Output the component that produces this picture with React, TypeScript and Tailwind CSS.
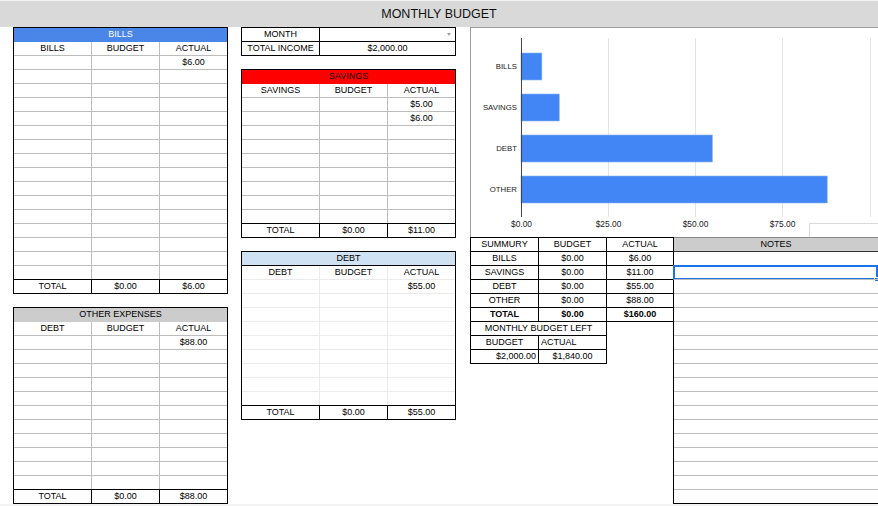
import React from "react";

const C1 = "w-[77px]";
const C2 = "w-[68px]";

type Cells = [string, string, string];

function Row({
  cells,
  top,
  line,
  bold,
}: {
  cells: Cells;
  top: string;
  line: string;
  bold?: boolean;
}) {
  return (
    <div className={`h-[14px] flex border-t ${top} ${bold ? "font-bold" : ""}`}>
      <div className={`${C1} flex items-center justify-center`}>{cells[0]}</div>
      <div className={`${C2} border-l ${line} flex items-center justify-center`}>{cells[1]}</div>
      <div className={`${C2} border-l ${line} flex items-center justify-center`}>{cells[2]}</div>
    </div>
  );
}

function Table({
  title,
  titleCls,
  titleLine,
  heads,
  data,
  rows,
  total,
  line,
}: {
  title: string;
  titleCls: string;
  titleLine: string;
  heads: Cells;
  data: Record<number, Cells>;
  rows: number;
  total: Cells;
  line: string;
}) {
  return (
    <div className="w-[215px] border border-black">
      <div className={`h-[13px] flex items-center justify-center ${titleCls}`}>{title}</div>
      <Row cells={heads} top={titleLine} line={line} />
      {Array.from({ length: rows }).map((_, i) => (
        <Row key={i} cells={data[i] ?? ["", "", ""]} top={line} line={line} />
      ))}
      <Row cells={total} top="border-black" line="border-black" />
    </div>
  );
}

function Chart() {
  const bars = [
    { label: "BILLS", v: 6 },
    { label: "SAVINGS", v: 11 },
    { label: "DEBT", v: 55 },
    { label: "OTHER", v: 88 },
  ];
  const x0 = 50;
  const unit = 3.48;
  const grid = [137, 224, 311, 399];
  const ticks = [
    { x: 50, t: "$0.00" },
    { x: 137, t: "$25.00" },
    { x: 224, t: "$50.00" },
    { x: 311, t: "$75.00" },
  ];
  const font = "'Liberation Sans',Arial,sans-serif";
  return (
    <svg width="407" height="209" viewBox="0 0 407 209" className="block">
      {grid.map((g) => (
        <line key={g} x1={g + 0.5} x2={g + 0.5} y1={10} y2={189} stroke="#e3e3e3" strokeWidth={1} />
      ))}
      {bars.map((b, i) => {
        const y = 25 + i * 41;
        return (
          <g key={b.label}>
            <rect x={x0} y={y} width={b.v * unit} height={27} fill="#4285f4" stroke="#8ab4f8" strokeWidth={0.6} />
            <text
              x={46}
              y={y + 13.5}
              textAnchor="end"
              dominantBaseline="central"
              fontSize="7.8"
              fill="#222"
              fontFamily={font}
            >
              {b.label}
            </text>
          </g>
        );
      })}
      <line x1={x0 + 0.5} x2={x0 + 0.5} y1={10} y2={189} stroke="#444" strokeWidth={1} />
      {ticks.map((t) => (
        <text
          key={t.t}
          x={t.x + 0.5}
          y={196}
          textAnchor="middle"
          dominantBaseline="central"
          fontSize="8.4"
          fill="#222"
          fontFamily={font}
        >
          {t.t}
        </text>
      ))}
      <rect x={338.5} y={195.5} width={70} height={15} fill="#fff" stroke="#dadada" strokeWidth={1} />
    </svg>
  );
}

export default function App() {
  const summary: Cells[] = [
    ["BILLS", "$0.00", "$6.00"],
    ["SAVINGS", "$0.00", "$11.00"],
    ["DEBT", "$0.00", "$55.00"],
    ["OTHER", "$0.00", "$88.00"],
  ];
  return (
    <div className="w-[878px] h-[506px] overflow-hidden bg-white text-black text-[9px] leading-none whitespace-nowrap font-['Liberation_Sans',Arial,sans-serif]">
      <div className="h-px bg-[#f1f3f4]" />
      <div className="h-[26px] bg-[#d9d9d9] flex items-center justify-center text-[12.5px] text-[#111]">
        MONTHLY BUDGET
      </div>
      <div className="h-[477px] flex">
        {/* column 1 */}
        <div className="ml-[13px] flex flex-col gap-[13px]">
          <Table
            title="BILLS"
            titleCls="bg-[#4a86e8] text-white"
            titleLine="border-[#4a86e8]"
            heads={["BILLS", "BUDGET", "ACTUAL"]}
            data={{ 0: ["", "", "$6.00"] }}
            rows={16}
            total={["TOTAL", "$0.00", "$6.00"]}
            line="border-[#bdbdbd]"
          />
          <Table
            title="OTHER EXPENSES"
            titleCls="bg-[#cccccc]"
            titleLine="border-[#cccccc]"
            heads={["DEBT", "BUDGET", "ACTUAL"]}
            data={{ 0: ["", "", "$88.00"] }}
            rows={11}
            total={["TOTAL", "$0.00", "$88.00"]}
            line="border-[#bdbdbd]"
          />
        </div>
        {/* column 2 */}
        <div className="ml-[13px] flex flex-col gap-[13px]">
          <div className="w-[215px] border border-black">
            <div className="h-[13px] flex">
              <div className="w-[77px] flex items-center justify-center">MONTH</div>
              <div className="w-[136px] border-l border-black flex items-center justify-end pr-[4px]">
                <span className="w-0 h-0 border-x-[2.5px] border-x-transparent border-t-[3px] border-t-[#a0a0a0]" />
              </div>
            </div>
            <div className="h-[14px] flex border-t border-black">
              <div className="w-[77px] flex items-center justify-center">TOTAL INCOME</div>
              <div className="w-[136px] border-l border-black flex items-center justify-center">$2,000.00</div>
            </div>
          </div>
          <Table
            title="SAVINGS"
            titleCls="bg-[#ff0000] text-[#111]"
            titleLine="border-[#ff0000]"
            heads={["SAVINGS", "BUDGET", "ACTUAL"]}
            data={{ 0: ["", "", "$5.00"], 1: ["", "", "$6.00"] }}
            rows={9}
            total={["TOTAL", "$0.00", "$11.00"]}
            line="border-[#bdbdbd]"
          />
          <Table
            title="DEBT"
            titleCls="bg-[#cfe2f3]"
            titleLine="border-black"
            heads={["DEBT", "BUDGET", "ACTUAL"]}
            data={{ 0: ["", "", "$55.00"] }}
            rows={9}
            total={["TOTAL", "$0.00", "$55.00"]}
            line="border-[#ebebeb]"
          />
        </div>
        {/* column 3 */}
        <div className="ml-[14px] w-[408px] flex flex-col">
          <div className="h-[210px] border-t border-l border-[#9e9e9e]">
            <Chart />
          </div>
          <div className="flex">
            <div className="w-[203px] flex flex-col">
              <div className="border-l border-t border-b border-black">
                <div className="h-[13px] flex">
                  <div className="w-[67px] flex items-center justify-center">SUMMURY</div>
                  <div className="w-[68px] border-l border-black flex items-center justify-center">BUDGET</div>
                  <div className="w-[67px] border-l border-black flex items-center justify-center">ACTUAL</div>
                </div>
                {summary.map((r) => (
                  <div key={r[0]} className="h-[14px] flex border-t border-black">
                    <div className="w-[67px] flex items-center justify-center">{r[0]}</div>
                    <div className="w-[68px] border-l border-black flex items-center justify-center">{r[1]}</div>
                    <div className="w-[67px] border-l border-black flex items-center justify-center">{r[2]}</div>
                  </div>
                ))}
                <div className="h-[14px] flex border-t border-black font-bold">
                  <div className="w-[67px] flex items-center justify-center">TOTAL</div>
                  <div className="w-[68px] border-l border-black flex items-center justify-center">$0.00</div>
                  <div className="w-[67px] border-l border-black flex items-center justify-center">$160.00</div>
                </div>
              </div>
              <div className="w-[137px] border-l border-r border-b border-black">
                <div className="h-[13px] flex items-center justify-center">MONTHLY BUDGET LEFT</div>
                <div className="h-[14px] flex border-t border-black">
                  <div className="w-[67px] flex items-center justify-center">BUDGET</div>
                  <div className="w-[68px] border-l border-black flex items-center pl-[2px]">ACTUAL</div>
                </div>
                <div className="h-[14px] flex border-t border-black">
                  <div className="w-[67px] flex items-center justify-end pr-[2px]">$2,000.00</div>
                  <div className="w-[68px] border-l border-black flex items-center justify-center">$1,840.00</div>
                </div>
              </div>
            </div>
            <div className="w-[205px] border-l border-b border-black">
              <div className="h-[14px] border-t border-[#8a8a8a] bg-[#cccccc] flex items-center justify-center">
                NOTES
              </div>
              {Array.from({ length: 18 }).map((_, i) => (
                <div
                  key={i}
                  className={`h-[14px] border-t relative ${i === 0 ? "border-[#333]" : "border-[#bdbdbd]"}`}
                >
                  {i === 1 && (
                    <div className="absolute left-[-1px] top-[-1px] w-[205px] h-[15px] border-2 border-[#1a73e8]">
                      <div className="absolute right-[-3px] bottom-[-4px] w-[5px] h-[5px] bg-[#1a73e8] border border-white" />
                    </div>
                  )}
                </div>
              ))}
            </div>
          </div>
        </div>
      </div>
      <div className="h-[2px] bg-[#f3f3f3]" />
    </div>
  );
}
